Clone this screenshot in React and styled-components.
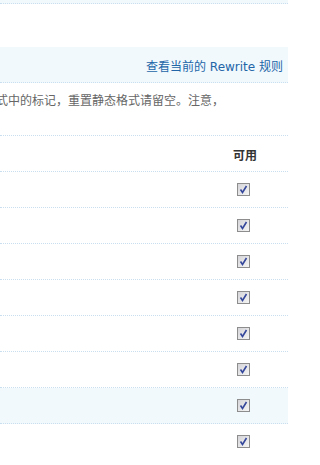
import React from "react";
import styled, { createGlobalStyle } from "styled-components";

const Global = createGlobalStyle`
  html, body { margin: 0; padding: 0; background: #fff; overflow: hidden; }
  body { font: 12px "DejaVu Sans", "Noto Sans CJK SC", sans-serif; color: #333; }
`;

const Page = styled.div`
  width: 288px;
  padding-right: 9px;
`;

const TopStrip = styled.div`
  height: 3px;
  background: #f2f9fd;
  border-bottom: 1px dotted #c9dff0;
  margin-bottom: 43px;
`;

const LinkBar = styled.div`
  height: 34px;
  background: #f2f9fd;
  border-bottom: 1px dotted #c9dff0;
  display: flex;
  align-items: center;
  justify-content: flex-end;
  padding-right: 5px;
  padding-top: 1px;
`;

const Link = styled.a`
  color: #2366a8;
  text-decoration: none;
  font-size: 12px;
  white-space: nowrap;
`;

const Tip = styled.div`
  height: 52px;
  border-bottom: 1px dotted #c9dff0;
  color: #666;
  white-space: nowrap;
  overflow: hidden;
  text-indent: -4px;
  line-height: 14px;
  padding-top: 11px;
  box-sizing: border-box;
  height: 53px;
`;

const Table = styled.div`
  display: flex;
  flex-direction: column;
`;

const Row = styled.div`
  display: flex;
  align-items: center;
  height: 35px;
  border-bottom: ${(p) => (p.$last ? "none" : "1px dotted #c9dff0")};
  background: ${(p) => (p.$hover ? "#f2f9fd" : "transparent")};
`;

const Spacer = styled.div`
  flex: 1;
`;

const Cell = styled.div`
  width: 55px;
  display: flex;
  align-items: center;
`;

const HeadText = styled.span`
  font-weight: 700;
  color: #333;
  font-family: "Noto Sans CJK SC", sans-serif;
  font-size: 12px;
  margin-top: 2px;
`;

const Box = styled.span`
  display: inline-block;
  width: 13px;
  height: 13px;
  margin-left: 4px;
  margin-top: -1px;
  line-height: 0;
`;

function Check() {
  return (
    <Box>
      <svg width="13" height="13" viewBox="0 0 13 13">
        <defs>
          <linearGradient id="cbg" x1="0" y1="0" x2="1" y2="1">
            <stop offset="0" stopColor="#d4d4d8" />
            <stop offset="1" stopColor="#f6f6f6" />
          </linearGradient>
        </defs>
        <rect x="0.5" y="0.5" width="12" height="12" fill="url(#cbg)" stroke="#8d8d8d" />
        <path d="M3.5 6.5 L5.5 9.5 L9.5 3" fill="none" stroke="#34479a" strokeWidth="1.6" />
      </svg>
    </Box>
  );
}

export default function App() {
  const rows = [0, 1, 2, 3, 4, 5, 6, 7];
  return (
    <Page>
      <Global />
      <TopStrip />
      <LinkBar>
        <Link href="#">查看当前的 Rewrite 规则</Link>
      </LinkBar>
      <Tip>式中的标记，重置静态格式请留空。注意，</Tip>
      <Table>
        <Row>
          <Spacer />
          <Cell>
            <HeadText>可用</HeadText>
          </Cell>
        </Row>
        {rows.map((i) => (
          <Row key={i} $hover={i === 6} $last={i === 7}>
            <Spacer />
            <Cell>
              <Check />
            </Cell>
          </Row>
        ))}
      </Table>
    </Page>
  );
}
